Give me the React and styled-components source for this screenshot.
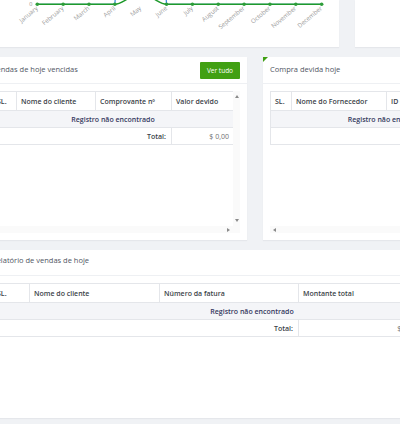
import styled, { createGlobalStyle } from 'styled-components';

const GlobalStyle = createGlobalStyle`
  html, body {
    margin: 0;
    padding: 0;
  }
  body {
    background: #f0f2f5;
    font-family: 'Open Sans', 'Liberation Sans', sans-serif;
    overflow: hidden;
  }
`;

const Page = styled.div`
  width: 560px;
  height: 424px;
  margin-left: -15px;
  display: flex;
  flex-direction: column;
  gap: 10px;
`;

const Row = styled.div`
  display: flex;
  gap: 16px;
  height: ${(p) => p.$height}px;
  flex-shrink: 0;
`;

const Card = styled.div`
  position: relative;
  background: #fff;
  box-shadow: 0 1px 1px rgba(30, 40, 60, 0.05);
  display: flex;
  flex-direction: column;
  width: ${(p) => p.$width}px;
  flex-shrink: 0;
  overflow: hidden;

  ${(p) =>
    p.$flag &&
    `
    &::before {
      content: '';
      position: absolute;
      top: 0;
      left: 0;
      border-top: 5px solid #3f9f12;
      border-right: 5px solid transparent;
    }
  `}
`;

const CardHeader = styled.div`
  display: flex;
  justify-content: space-between;
  align-items: flex-start;
  box-sizing: border-box;
  height: ${(p) => p.$height || 27}px;
  padding: ${(p) => (p.$height ? '3px 7px' : '5px 7px')};
  border-bottom: 1px solid #eef0f3;
`;

const Title = styled.h4`
  margin: 0;
  font-size: 7.5px;
  font-weight: 400;
  line-height: 14px;
  color: #4f5563;
`;

const GreenButton = styled.button`
  width: 40px;
  height: 17px;
  padding: 0;
  border: none;
  border-radius: 1px;
  background: #41a013;
  color: #fff;
  font-family: inherit;
  font-size: 6.5px;
  cursor: pointer;
`;

const CardBody = styled.div`
  flex: 1;
  min-height: 0;
  display: flex;
  align-items: ${(p) => (p.$top ? 'flex-start' : 'stretch')};
  padding: 7px;
`;

const ScrollBox = styled.div`
  flex: 1;
  display: grid;
  grid-template-columns: 1fr 7px;
  grid-template-rows: 1fr 7px;
  min-width: 0;
`;

const Viewport = styled.div`
  overflow: hidden;
  background: #fff;
`;

const VBar = styled.div`
  background: #fafafa;
  display: flex;
  flex-direction: column;
  justify-content: space-between;
  align-items: center;
  padding: 4px 0;
`;

const HBar = styled.div`
  background: #fafafa;
  display: flex;
  justify-content: space-between;
  align-items: center;
  padding: 0 3px;
`;

const Corner = styled.div`
  background: #fafafa;
`;

const Arrow = styled.span`
  width: 0;
  height: 0;
  ${(p) =>
    p.$dir === 'up' &&
    'border-left: 2px solid transparent; border-right: 2px solid transparent; border-bottom: 3px solid #8a8a8a;'}
  ${(p) =>
    p.$dir === 'down' &&
    'border-left: 2px solid transparent; border-right: 2px solid transparent; border-top: 3px solid #8a8a8a;'}
  ${(p) =>
    p.$dir === 'left' &&
    'border-top: 2px solid transparent; border-bottom: 2px solid transparent; border-right: 3px solid #8a8a8a;'}
  ${(p) =>
    p.$dir === 'right' &&
    'border-top: 2px solid transparent; border-bottom: 2px solid transparent; border-left: 3px solid #8a8a8a;'}
`;

const Table = styled.table`
  border-collapse: collapse;
  table-layout: fixed;
  width: ${(p) => p.$width}px;
  font-size: 7px;
  color: #3a3f4a;
`;

const Th = styled.th`
  height: 18px;
  padding: 0 4px;
  text-align: left;
  font-weight: 600;
  color: #3b3f48;
  border: 1px solid #e4e6ea;
  white-space: nowrap;
  overflow: hidden;
`;

const Td = styled.td`
  height: 16px;
  padding: 0 5px 0 4px;
  border: 1px solid #e4e6ea;
  text-align: ${(p) => p.$align || 'left'};
  font-weight: ${(p) => (p.$bold ? 600 : 400)};
  color: ${(p) => (p.$bold ? '#3b3f48' : '#707070')};
  white-space: nowrap;
`;

const EmptyRow = styled.tr`
  background: #f4f5f8;

  td {
    text-align: center;
    font-weight: 600;
    color: #34395e;
  }
`;

const months = [
  'January',
  'February',
  'March',
  'April',
  'May',
  'June',
  'July',
  'August',
  'September',
  'October',
  'November',
  'December',
];

const X0 = 52.3;
const STEP = 25.85;
const AXIS = 4.3;

const SalesChart = () => {
  const xs = months.map((_, i) => X0 + i * STEP);
  const [xApr, xMay, xJun] = [xs[3], xs[4], xs[5]];
  const green = `M ${xs[0]} ${AXIS} L ${xApr} ${AXIS} C ${xApr + 8} ${AXIS}, ${xMay - 12} -5, ${xMay} -5 S ${xJun - 8} ${AXIS}, ${xJun} ${AXIS} L ${xs[11]} ${AXIS}`;
  const blue = `M ${xs[0]} ${AXIS} L ${xApr} ${AXIS} C ${xApr + 2} -30, ${xMay - 8} -70, ${xMay} -70 S ${xJun - 2} -30, ${xJun} ${AXIS} L ${xs[11]} ${AXIS}`;
  return (
    <svg width="354" height="47" viewBox="0 0 354 47">
      <path d={blue} fill="none" stroke="#3a8fd9" strokeWidth="1.3" />
      <path d={green} fill="none" stroke="#1f9a2c" strokeWidth="1.4" />
      {xs.map((x, i) =>
        i === 4 ? null : <circle key={i} cx={x} cy={AXIS} r="1.8" fill="#2e9d3a" />
      )}
      <text x="47.5" y="6.3" fontSize="5.5" fill="#8a8a8a" textAnchor="end" fontFamily="Open Sans, sans-serif">
        0
      </text>
      {xs.map((x, i) => (
        <text
          key={months[i]}
          x={x + 1}
          y={9}
          fontSize="6.2"
          fill="#9a9a9a"
          textAnchor="end"
          fontFamily="Open Sans, sans-serif"
          transform={`rotate(-40 ${x + 1} 9)`}
        >
          {months[i]}
        </text>
      ))}
    </svg>
  );
};

const ScrollArea = ({ children, leftArrow, rightArrow }) => (
  <ScrollBox>
    <Viewport>{children}</Viewport>
    <VBar>
      <Arrow $dir="up" />
      <Arrow $dir="down" />
    </VBar>
    <HBar>
      {leftArrow ? <Arrow $dir="left" /> : <span />}
      {rightArrow ? <Arrow $dir="right" /> : <span />}
    </HBar>
    <Corner />
  </ScrollBox>
);

const Cols = ({ widths }) => (
  <colgroup>
    {widths.map((w, i) => (
      <col key={i} style={{ width: w }} />
    ))}
  </colgroup>
);

const App = () => {
  return (
    <>
      <GlobalStyle />
      <Page>
        <Row $height={47}>
          <Card $width={354}>
            <SalesChart />
          </Card>
          <Card $width={140} />
        </Row>

        <Row $height={183}>
          <Card $width={262}>
            <CardHeader>
              <Title>Vendas de hoje vencidas</Title>
              <GreenButton>Ver tudo</GreenButton>
            </CardHeader>
            <CardBody>
              <ScrollArea rightArrow>
                <Table $width={242}>
                  <Cols widths={[24, 79, 76, 63]} />
                  <thead>
                    <tr>
                      <Th>SL.</Th>
                      <Th>Nome do cliente</Th>
                      <Th>Comprovante nº</Th>
                      <Th>Valor devido</Th>
                    </tr>
                  </thead>
                  <tbody>
                    <EmptyRow>
                      <Td colSpan={4}>Registro não encontrado</Td>
                    </EmptyRow>
                    <tr>
                      <Td colSpan={3} $align="right" $bold>
                        Total:
                      </Td>
                      <Td $align="right">$ 0,00</Td>
                    </tr>
                  </tbody>
                </Table>
              </ScrollArea>
            </CardBody>
          </Card>

          <Card $width={270} $flag>
            <CardHeader>
              <Title>Compra devida hoje</Title>
            </CardHeader>
            <CardBody>
              <ScrollArea leftArrow>
                <Table $width={239}>
                  <Cols widths={[21, 95, 60, 63]} />
                  <thead>
                    <tr>
                      <Th>SL.</Th>
                      <Th>Nome do Fornecedor</Th>
                      <Th>ID da compra</Th>
                      <Th>Valor devido</Th>
                    </tr>
                  </thead>
                  <tbody>
                    <EmptyRow>
                      <Td colSpan={4}>Registro não encontrado</Td>
                    </EmptyRow>
                    <tr>
                      <Td colSpan={3} />
                      <Td />
                    </tr>
                  </tbody>
                </Table>
              </ScrollArea>
            </CardBody>
          </Card>
        </Row>

        <Row $height={168}>
          <Card $width={560}>
            <CardHeader $height={26}>
              <Title>Relatório de vendas de hoje</Title>
            </CardHeader>
            <CardBody $top>
              <Table $width={520}>
                <Cols widths={[37, 130, 139, 124, 90]} />
                <thead>
                  <tr>
                    <Th>SL.</Th>
                    <Th>Nome do cliente</Th>
                    <Th>Número da fatura</Th>
                    <Th>Montante total</Th>
                    <Th>Ação</Th>
                  </tr>
                </thead>
                <tbody>
                  <EmptyRow>
                    <Td colSpan={5}>Registro não encontrado</Td>
                  </EmptyRow>
                  <tr>
                    <Td colSpan={3} $align="right" $bold>
                      Total:
                    </Td>
                    <Td $align="right">$ 0,00</Td>
                    <Td />
                  </tr>
                </tbody>
              </Table>
            </CardBody>
          </Card>
        </Row>
      </Page>
    </>
  );
};

export default App;
